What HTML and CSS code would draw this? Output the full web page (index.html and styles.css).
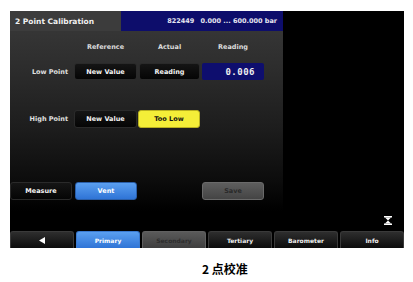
FILE: index.html
```html
<!DOCTYPE html>
<html>
<head>
<meta charset="utf-8">
<link rel="stylesheet" href="styles.css">
</head>
<body>
<div class="screen">
  <div class="main">
    <div class="panel">
      <div class="header">
        <div class="title">2 Point Calibration</div>
        <div class="range"><span class="serial">822449</span><span>0.000 ... 600.000 bar</span></div>
      </div>
      <div class="row colheads">
        <div class="label"></div>
        <div class="cell w63">Reference</div>
        <div class="cell w61">Actual</div>
        <div class="cell w62">Reading</div>
      </div>
      <div class="row low">
        <div class="label">Low Point</div>
        <div class="btn black w63">New Value</div>
        <div class="btn black w61">Reading</div>
        <div class="value w62">0.006</div>
      </div>
      <div class="row high">
        <div class="label">High Point</div>
        <div class="btn black w63">New Value</div>
        <div class="btn yellow w62b">Too Low</div>
      </div>
      <div class="actions">
        <div class="btn black w62">Measure</div>
        <div class="btn blue w62">Vent</div>
        <div class="spacer"></div>
        <div class="btn gray w62">Save</div>
      </div>
    </div>
    <div class="side">
      <svg class="hourglass" width="8" height="9" viewBox="0 0 8 9">
        <rect x="0" y="0" width="8" height="1.5" fill="#fff"/>
        <rect x="0" y="7.5" width="8" height="1.5" fill="#fff"/>
        <polygon points="1,1.5 7,1.5 4,4.5" fill="#fff"/>
        <polygon points="4,4.5 7,7.5 1,7.5" fill="#fff"/>
      </svg>
    </div>
  </div>
  <div class="nav">
    <div class="tab"><svg width="6" height="7" viewBox="0 0 6 7"><polygon points="0,3.5 6,0 6,7" fill="#fff"/></svg></div>
    <div class="tab active">Primary</div>
    <div class="tab dim">Secondary</div>
    <div class="tab">Tertiary</div>
    <div class="tab">Barometer</div>
    <div class="tab">Info</div>
  </div>
</div>
<div class="caption">2 点校准</div>
</body>
</html>
```
FILE: styles.css
```css
html, body {
  margin: 0;
  padding: 0;
  background: #fff;
}
body {
  font-family: "DejaVu Sans", "Noto Sans CJK SC", sans-serif;
  font-weight: bold;
  font-size: 6.5px;
  color: #fff;
  width: 413px;
  height: 282px;
  overflow: hidden;
}
.screen {
  margin: 11px 0 0 10px;
  width: 394px;
  height: 237px;
  background: #000;
  display: flex;
  flex-direction: column;
}
.main {
  display: flex;
  height: 220px;
}
.panel {
  width: 273px;
  background: linear-gradient(#3a3a3a 0px, #2c2c2c 60px, #1c1c1c 120px, #0c0c0c 170px, #000 200px);
  display: flex;
  flex-direction: column;
}
.side {
  flex: 1;
  background: #000;
  display: flex;
  justify-content: flex-end;
  align-items: flex-end;
}
.hourglass {
  margin: 0 12px 6px 0;
}
.header {
  height: 20px;
  display: flex;
  align-items: center;
  background: #3c3c3c;
}
.title {
  width: 111px;
  padding-left: 5px;
  box-sizing: border-box;
  font-size: 7.5px;
  color: #f0f0f0;
}
.range {
  flex: 1;
  align-self: stretch;
  background: #0d0d6b;
  display: flex;
  align-items: center;
  justify-content: flex-end;
  padding-right: 6px;
  gap: 6px;
  font-size: 6.5px;
  color: #e6e6f0;
}
.row {
  display: flex;
  align-items: center;
}
.colheads {
  margin-top: 10px;
  height: 11px;
  color: #dcdcdc;
}
.low {
  margin-top: 11px;
  height: 17px;
}
.high {
  margin-top: 30px;
  height: 18px;
}
.label {
  width: 58px;
  margin-right: 6px;
  text-align: right;
  color: #e0e0e0;
}
.cell {
  text-align: center;
  margin-right: 2px;
}
.w63 { width: 63px; }
.w61 { width: 61px; }
.w62 { width: 62px; }
.w62b { width: 62px; }
.row .btn, .row .value { margin-right: 2px; height: 17px; }
.high .btn { height: 18px; }
.btn {
  box-sizing: border-box;
  display: flex;
  align-items: center;
  justify-content: center;
  border-radius: 3px;
}
.black {
  background: linear-gradient(#151515, #050505);
  border: 1px solid #2a2a2a;
  color: #f4f4f4;
}
.yellow {
  background: #f4ee38;
  border: 1px solid #b8b020;
  color: #111;
}
.yellow.w62b { margin-left: -1px; }
.blue {
  background: linear-gradient(#5a9ff0, #2f74d6);
  border: 1px solid #2a5ea8;
  color: #fff;
}
.gray {
  background: linear-gradient(#5e5e5e, #444);
  border: 1px solid #6a6a6a;
  color: #2a2a2a;
}
.value {
  box-sizing: border-box;
  background: #0e0e6e;
  border-radius: 2px;
  display: flex;
  align-items: center;
  justify-content: flex-end;
  padding-right: 9px;
  font-family: "DejaVu Sans Mono", monospace;
  font-size: 9px;
  letter-spacing: 0.5px;
  color: #f0f0f0;
}
.actions {
  margin-top: 54px;
  display: flex;
  height: 18px;
}
.actions .btn { height: 18px; }
.actions .blue { margin-left: 3px; }
.spacer { width: 65px; }
.nav {
  height: 17px;
  display: flex;
  gap: 2px;
}
.tab {
  flex: 1;
  display: flex;
  align-items: center;
  justify-content: center;
  border-radius: 3px 3px 0 0;
  background: linear-gradient(#2e2e2e, #0c0c0c);
  border: 1px solid #3a3a3a;
  border-bottom: none;
  color: #eee;
  font-size: 6px;
}
.tab.active {
  background: linear-gradient(#5a9ff0, #2f74d6);
  border-color: #3a7ad0;
  color: #fff;
}
.tab.dim {
  background: linear-gradient(#5a5a5a, #3e3e3e);
  border-color: #606060;
  color: #2e2e2e;
}
.caption {
  margin-top: 12px;
  padding-left: 202px;
  font-family: "Noto Sans CJK SC", sans-serif;
  font-weight: bold;
  font-size: 12px;
  color: #000;
}
```
